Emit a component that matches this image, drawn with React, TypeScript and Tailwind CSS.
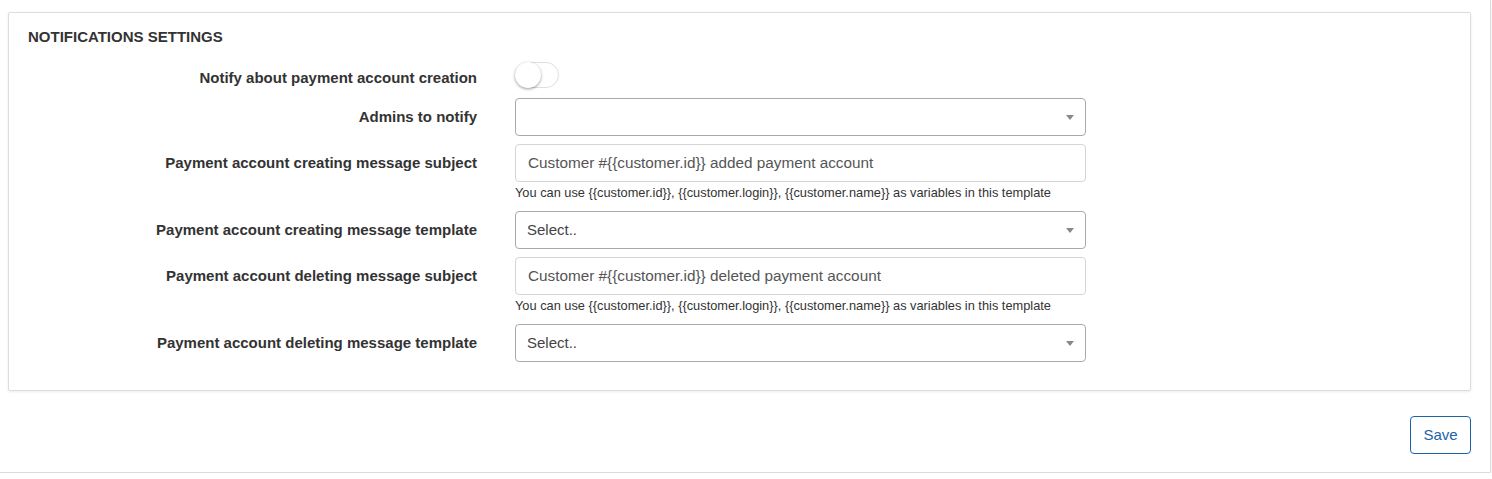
import React from "react";

function SelectBox(props: { placeholder?: string }) {
  return (
    <div className="flex h-[38px] w-[571px] items-center justify-between rounded-[4px] border border-[#aaaaaa] bg-white pl-[11px] pr-[11px]">
      <span className="text-[15px] text-[#444]">{props.placeholder ?? ""}</span>
      <span className="h-0 w-0 border-x-[4px] border-t-[5px] border-x-transparent border-t-[#888]" />
    </div>
  );
}

function TextBox(props: { value: string; hint?: boolean }) {
  return (
    <div className="flex flex-col">
      <div className="flex h-[38px] w-[571px] items-center rounded-[4px] border border-[#d5d5d5] bg-white px-[12px] text-[15.3px] text-[#555]">
        {props.value}
      </div>
      {props.hint ? (
        <p className="mt-[3px] mb-[3px] text-[12.8px] leading-[15px] text-[#333]">
          {"You can use {{customer.id}}, {{customer.login}}, {{customer.name}} as variables in this template"}
        </p>
      ) : null}
    </div>
  );
}

function Row(props: { label: string; children: React.ReactNode; className?: string; labelTop?: string }) {
  return (
    <div className={"flex items-start gap-[38px] " + (props.className ?? "mb-[8px]")}>
      <label
        className={
          "w-[449px] shrink-0 text-right text-[15px] font-bold leading-[20px] text-[#333] " +
          (props.labelTop ?? "pt-[9px]")
        }
      >
        {props.label}
      </label>
      {props.children}
    </div>
  );
}

export default function App() {
  return (
    <div
      className="h-[473px] w-[1491px] border-r border-b border-[#dcdcdc] bg-white shadow-[0_2px_3px_rgba(0,0,0,0.05)]"
      style={{ fontFamily: '"Liberation Sans", Arial, sans-serif' }}
    >
      <div className="px-[8px] pt-[12px]">
        <section className="h-[379px] w-[1463px] rounded-[2px] border border-[#dddddd] bg-white px-[19px] pt-[14px] shadow-[0_1px_3px_rgba(0,0,0,0.08)]">
          <h2 className="text-[15px] font-bold leading-[20px] text-[#333]">NOTIFICATIONS SETTINGS</h2>
          <div className="mt-[15px] flex flex-col">
            <Row label="Notify about payment account creation" className="mb-[10px]" labelTop="pt-[6px]">
              <div className="flex h-[26px] w-[44px] items-center rounded-full border border-[#dfdfdf] bg-white">
                <span className="-ml-px h-[26px] w-[26px] rounded-full bg-white shadow-[0_1px_3px_rgba(0,0,0,0.4)]" />
              </div>
            </Row>
            <Row label="Admins to notify">
              <SelectBox />
            </Row>
            <Row label="Payment account creating message subject">
              <TextBox value="Customer #{{customer.id}} added payment account" hint />
            </Row>
            <Row label="Payment account creating message template">
              <SelectBox placeholder="Select.." />
            </Row>
            <Row label="Payment account deleting message subject">
              <TextBox value="Customer #{{customer.id}} deleted payment account" hint />
            </Row>
            <Row label="Payment account deleting message template">
              <SelectBox placeholder="Select.." />
            </Row>
          </div>
        </section>
        <div className="mt-[25px] flex w-[1463px] justify-end">
          <button className="h-[38px] w-[61px] rounded-[4px] border border-[#1a63a8] bg-white text-[15px] text-[#1a63a8]">
            Save
          </button>
        </div>
      </div>
    </div>
  );
}
